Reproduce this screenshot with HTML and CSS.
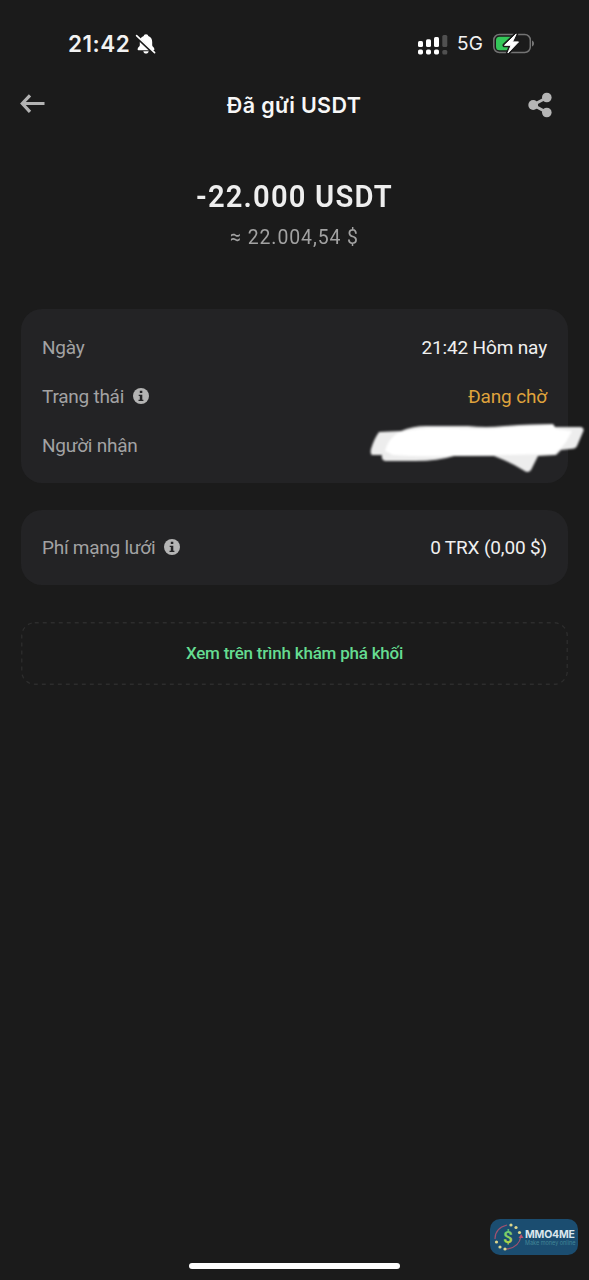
FILE: index.html
```html
<!DOCTYPE html>
<html lang="vi">
<head>
<meta charset="utf-8">
<title>Đã gửi USDT</title>
<link rel="stylesheet" href="styles.css">
</head>
<body>
<div class="screen">
  <div class="status-bar">
    <div class="clock"><span class="time">21:42</span>
      <svg class="bell" width="22" height="22" viewBox="0 0 22 22"><path d="M11 1.200c-1.500 0-2.200.9-2.300 1.900C6 4 4.800 6.300 4.800 9v3.200c0 1.300-2.200 2.300-2.200 4 0 .7.5 1 1.200 1h14.400c.7 0 1.200-.3 1.200-1 0-1.700-2.200-2.700-2.200-4V9c0-2.700-1.200-5-3.900-5.900C13.200 2.100 12.500 1.200 11 1.200zM8.300 18.300h5.400c-.3 1.500-1.300 2.300-2.700 2.300s-2.400-.8-2.700-2.300z" fill="#fff"/><path d="M1.300 3.800l18 17" stroke="#1b1b1b" stroke-width="2.800"/><path d="M1.600 2.600l18 17" stroke="#fff" stroke-width="1.600" stroke-linecap="round"/></svg>
    </div>
    <div class="indicators">
      <svg width="30" height="22" viewBox="0 0 30 22" fill="#fff"><rect x="0" y="8" width="5" height="6" rx="1.500"/><rect x="8" y="6.200" width="5" height="7.800" rx="1.500"/><rect x="16" y="4" width="5" height="10" rx="1.500"/><g fill="#505050"><rect x="24.300" y="2" width="5" height="12" rx="1.500"/><rect x="24.300" y="17" width="5" height="4.500" rx="1.500"/></g><rect x="0" y="16.500" width="5" height="5" rx="1.700"/><rect x="8" y="16.500" width="5" height="5" rx="1.700"/><rect x="16" y="16.500" width="5" height="5" rx="1.700"/></svg>
      <span class="network">5G</span>
      <svg class="battery" width="42" height="24" viewBox="0 0 42 24"><rect x=".8" y="2.500" width="36.500" height="18" rx="5.500" fill="none" stroke="#737373" stroke-width="1.500"/><path d="M39 8.500c2.700.8 2.700 5.200 0 6z" fill="#777"/><path d="M6.500 4.700H18v13.600H6.500a3.500 3.500 0 0 1-3.500-3.500V8.200a3.500 3.500 0 0 1 3.500-3.500z" fill="#34c759"/><path d="M23.200 2L11.500 13.300h6.600l-3.200 7.700L25.500 9.900h-6z" fill="#fff" stroke="#1b1b1b" stroke-width="4" stroke-linejoin="round"/><path d="M23.200 2L11.500 13.300h6.600l-3.200 7.700L25.500 9.900h-6z" fill="#fff" stroke="#fff" stroke-linejoin="round"/></svg>
    </div>
  </div>
  <header class="header">
    <svg class="back" width="26" height="22" viewBox="0 0 26 22" fill="none" stroke="#b3b3b3" stroke-width="3.200"><path d="M10 2.400L2.300 10.500l7.700 8.300M2 10.500H24.500"/></svg>
    <h1 class="title">Đã gửi USDT</h1>
    <svg class="share" width="24" height="26" viewBox="0 0 24 26" fill="#b5b5b5"><path d="M19 5.500L5 13l14 7.500" fill="none" stroke="#b5b5b5" stroke-width="2.900"/><circle cx="5.200" cy="13" r="4.900"/><circle cx="18.800" cy="5.500" r="4.800"/><circle cx="18.800" cy="20.500" r="4.800"/></svg>
  </header>
  <section class="summary">
    <div class="amount">-22.000 USDT</div>
    <div class="fiat">≈ 22.004,54 $</div>
  </section>
  <section class="card details">
    <div class="row"><span class="label">Ngày</span><span class="value">21:42 Hôm nay</span></div>
    <div class="row"><span class="label">Trạng thái</span><svg class="info" width="16" height="16" viewBox="0 0 16 16"><circle cx="8" cy="8" r="8" fill="#b4b4b4"/><path d="M6.800 2.800h2.500v2.200H6.800zM5.700 6.700h3.600v5h1.100v1.300H5.500v-1.300h1.300V8H5.700z" fill="#232325"/></svg><span class="value pending">Đang chờ</span></div>
    <div class="row"><span class="label">Người nhận</span>
      <svg class="redaction" width="218" height="56" viewBox="0 0 218 56"><defs><filter id="soft"><feGaussianBlur stdDeviation=".8"/></filter></defs><g filter="url(#soft)"><path d="M11 12L33 11Q45 6 58 6L100 6Q118 8 136 6Q165 4 185 4L187 7L213 7Q217 8 215 12L209 26Q208 29 202 29L193 30L188 35L170 36L163 50Q160 54 155 50Q142 42 126 36L86 36Q70 41 47 41H17Q13 40 14 35H4Q2 34 3 29Q6 19 11 12Z" fill="#ededed"/><path d="M30 13Q48 8 70 8L120 9Q153 6 185 5L188 9L204 11L198 22L193 28L186 34L80 36Q50 37 25 35L17 31Q20 19 30 13Z" fill="#fff"/></g></svg>
    </div>
  </section>
  <section class="card fee">
    <div class="row"><span class="label">Phí mạng lưới</span><svg class="info" width="16" height="16" viewBox="0 0 16 16"><circle cx="8" cy="8" r="8" fill="#b4b4b4"/><path d="M6.800 2.800h2.500v2.200H6.800zM5.700 6.700h3.600v5h1.100v1.300H5.500v-1.300h1.300V8H5.700z" fill="#232325"/></svg><span class="value">0 TRX (0,00 $)</span></div>
  </section>
  <a class="explorer"><svg class="outline" width="547" height="63"><rect x=".75" y=".75" width="545.500" height="61.500" rx="13" fill="none" stroke="#2d2d2d" stroke-width="1.300" stroke-dasharray="4 4"/></svg><span>Xem trên trình khám phá khối</span></a>
  <div class="watermark">
    <svg width="31" height="32" viewBox="0 0 31 32"><g fill="none" stroke="#a0526f" stroke-width="1.200"><path d="M2 18Q2 7 14 4M13 28Q26 27 28 15"/></g><path d="M25.500 17l2.700-4 2.300 4z" fill="#b95370"/><g fill="#ddd68b"><circle cx="18" cy="4" r="1.600"/><circle cx="23" cy="6.500" r="1.600"/><circle cx="26.500" cy="11.500" r="1.600"/><circle cx="3.500" cy="21" r="1.600"/><circle cx="7" cy="26" r="1.600"/><circle cx="12" cy="28" r="1.600"/></g><defs><linearGradient id="dollar" x2="0" y2="1"><stop stop-color="#54c783"/><stop offset="1" stop-color="#c4d43d"/></linearGradient></defs><text x="15" y="21.500" text-anchor="middle" class="dollar" fill="url(#dollar)">$</text></svg>
    <div class="brand"><span class="brand-name">MMO4ME</span><span class="tagline">Make money online</span></div>
  </div>
  <div class="home-indicator"></div>
</div>
</body>
</html>
```
FILE: styles.css
```css
* { box-sizing: border-box; }
body { margin: 0; background: #1b1b1b; }
.screen { position: relative; width: 589px; height: 1280px; overflow: hidden; background: #1b1b1b; color: #f2f2f2; font-family: Roboto, "Noto Sans", sans-serif; }
.status-bar { height: 80px; padding: 29px 54px 0 68px; display: flex; justify-content: space-between; align-items: flex-start; }
.clock { display: flex; align-items: center; gap: 4px; height: 30px; }
.time { width: 63px; font: 600 22.5px/30px Inter, sans-serif; letter-spacing: .5px; white-space: nowrap; }
.bell { flex: none; }
.indicators { display: flex; align-items: center; height: 30px; }
.network { width: 45px; padding-left: 9px; font: 400 19px/32px Inter, sans-serif; letter-spacing: .2px; }
.header { height: 50px; padding: 0 37px 0 20px; display: grid; grid-template-columns: 40px 1fr 24px; align-items: center; }
.title { margin: 0; text-align: center; font: 600 21.5px/30px Inter, sans-serif; letter-spacing: .35px; color: #f7f7f7; }
.back { margin-top: -3px; }
.summary { height: 179px; padding-top: 45px; text-align: center; }
.amount { font-size: 32px; line-height: 42px; font-weight: 600; letter-spacing: 1.3px; transform: scaleX(.912); color: #eee; }
.fiat { margin-top: 5px; font-size: 21px; line-height: 30px; letter-spacing: 1px; transform: scaleX(.925); color: #a2a2a2; }
.card { width: 547px; margin: 0 0 0 21px; border-radius: 21px; background: #232325; padding: 0 21px; }
.details { height: 174px; padding-top: 14px; }
.fee { height: 75px; margin-top: 27px; padding-top: 13px; }
.row { height: 49px; display: flex; align-items: center; font-size: 19px; line-height: 28px; white-space: nowrap; }
.label { color: #a2a2a3; letter-spacing: -.25px; }
.value { margin-left: auto; color: #f0f0f0; letter-spacing: -.15px; }
.info { margin: -2px 0 0 9px; flex: none; }
.pending { color: #dfa23c; }
.redaction { margin: 4px -39px 0 auto; flex: none; }
.explorer { position: relative; width: 547px; height: 63px; margin: 37px 0 0 21px; padding-bottom: 2px; display: flex; align-items: center; justify-content: center; font-size: 17px; line-height: 24px; font-weight: 500; letter-spacing: -.22px; color: #65dc91; }
.outline { position: absolute; inset: 0; }
.watermark { position: absolute; left: 490px; top: 1219px; width: 88px; height: 36px; border-radius: 10px; background: #1b4d70; display: flex; align-items: center; padding-left: 3px; }
.watermark svg { flex: none; }
.dollar { font: 700 17px Roboto, sans-serif; }
.brand { display: flex; flex-direction: column; padding-top: 1px; margin-left: 1px; }
.brand-name { font: 700 10.5px/11px Inter, sans-serif; letter-spacing: -.2px; color: #dce7ed; }
.tagline { font: 5.500px/7px Inter, sans-serif; color: #428697; white-space: nowrap; }
.home-indicator { position: absolute; left: 189px; top: 1263px; width: 211px; height: 6px; border-radius: 3px; background: #fff; }
```
